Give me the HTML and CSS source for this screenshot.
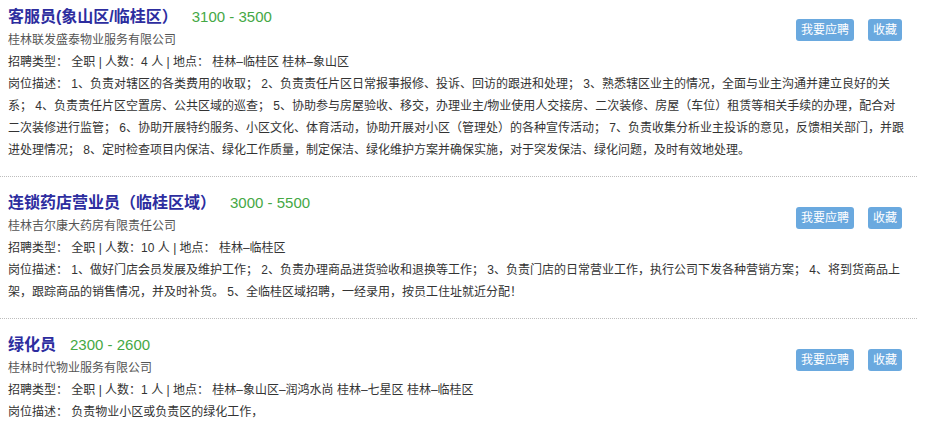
FILE: index.html
```html
<!DOCTYPE html>
<html lang="zh-CN">
<head>
<meta charset="utf-8">
<title>职位列表</title>
<link rel="stylesheet" href="styles.css">
</head>
<body>
<div class="job-list">
  <div class="job">
    <div class="actions">
      <a class="btn">我要应聘</a>
      <a class="btn">收藏</a>
    </div>
    <div class="job-head">
      <span class="job-title">客服员(象山区/临桂区）</span>
      <span class="salary">3100 - 3500</span>
    </div>
    <div class="company">桂林联发盛泰物业服务有限公司</div>
    <div class="meta">招聘类型： 全职 | 人数：4 人 | 地点： 桂林–临桂区 桂林–象山区</div>
    <div class="desc">岗位描述： 1、负责对辖区的各类费用的收取； 2、负责责任片区日常报事报修、投诉、回访的跟进和处理； 3、熟悉辖区业主的情况，全面与业主沟通并建立良好的关系； 4、负责责任片区空置房、公共区域的巡查； 5、协助参与房屋验收、移交，办理业主/物业使用人交接房、二次装修、房屋（车位）租赁等相关手续的办理，配合对二次装修进行监管； 6、协助开展特约服务、小区文化、体育活动，协助开展对小区（管理处）的各种宣传活动； 7、负责收集分析业主投诉的意见，反馈相关部门，并跟进处理情况； 8、定时检查项目内保洁、绿化工作质量，制定保洁、绿化维护方案并确保实施，对于突发保洁、绿化问题，及时有效地处理。</div>
  </div>
  <div class="job">
    <div class="actions">
      <a class="btn">我要应聘</a>
      <a class="btn">收藏</a>
    </div>
    <div class="job-head">
      <span class="job-title">连锁药店营业员（临桂区域）</span>
      <span class="salary">3000 - 5500</span>
    </div>
    <div class="company">桂林吉尔康大药房有限责任公司</div>
    <div class="meta">招聘类型： 全职 | 人数：10 人 | 地点： 桂林–临桂区</div>
    <div class="desc">岗位描述： 1、做好门店会员发展及维护工作； 2、负责办理商品进货验收和退换等工作； 3、负责门店的日常营业工作，执行公司下发各种营销方案； 4、将到货商品上架，跟踪商品的销售情况，并及时补货。 5、全临桂区域招聘，一经录用，按员工住址就近分配！</div>
  </div>
  <div class="job">
    <div class="actions">
      <a class="btn">我要应聘</a>
      <a class="btn">收藏</a>
    </div>
    <div class="job-head">
      <span class="job-title">绿化员</span>
      <span class="salary">2300 - 2600</span>
    </div>
    <div class="company">桂林时代物业服务有限公司</div>
    <div class="meta">招聘类型： 全职 | 人数：1 人 | 地点： 桂林–象山区–润鸿水尚 桂林–七星区 桂林–临桂区</div>
    <div class="desc">岗位描述： 负责物业小区或负责区的绿化工作，</div>
  </div>
</div>
</body>
</html>
```
FILE: styles.css
```css
html, body {
  margin: 0;
  padding: 0;
  background: #fff;
}
body {
  font-family: "Liberation Sans", "Noto Sans CJK SC", sans-serif;
  font-size: 12px;
  color: #333;
}
.job-list {
  width: 917px;
}
.job {
  padding: 14px 11px 15px 8px;
  border-bottom: 1px dotted #bdbdbd;
}
.job:first-child {
  padding-top: 5px;
}
.job:first-child .actions {
  margin-top: 14px;
}
.actions {
  float: right;
  display: flex;
  gap: 14px;
  margin-top: 16px;
  margin-right: 4px;
}
.btn {
  display: block;
  height: 22px;
  line-height: 22px;
  padding: 0 5px;
  background: #6aa9df;
  color: #fff;
  border-radius: 3px;
  font-size: 12px;
  cursor: pointer;
}
.job-head {
  display: flex;
  align-items: baseline;
  gap: 14px;
  height: 24px;
  line-height: 24px;
}
.job-title {
  font-size: 16px;
  font-weight: bold;
  color: #2d2d9f;
}
.salary {
  font-size: 15px;
  color: #45a845;
}
.company {
  line-height: 22px;
  color: #555;
}
.meta, .desc {
  line-height: 22px;
}
```
